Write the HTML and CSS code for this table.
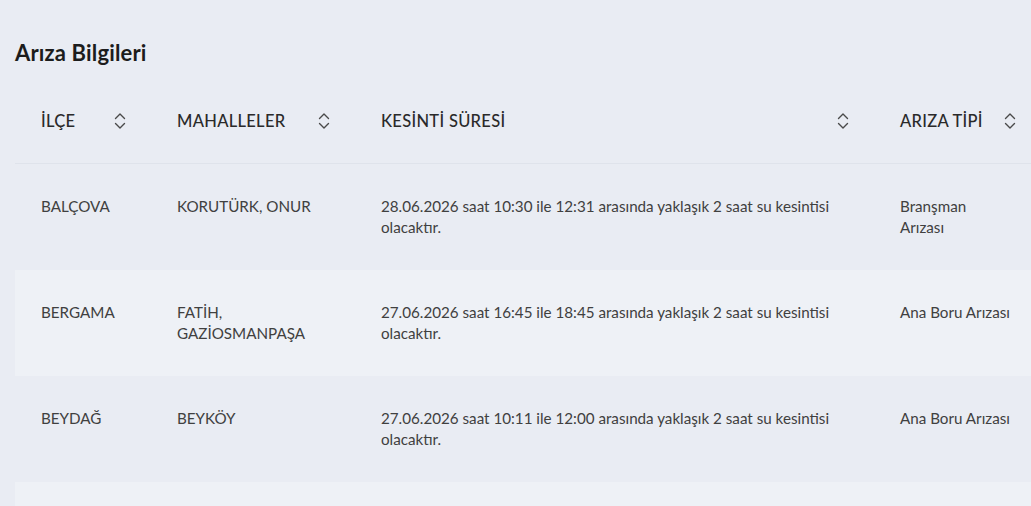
FILE: index.html
```html
<!DOCTYPE html>
<html lang="tr">
<head>
<meta charset="utf-8">
<title>Arıza Bilgileri</title>
<link rel="stylesheet" href="styles.css">
</head>
<body>
<main class="page">
  <h2 class="title">Arıza Bilgileri</h2>
  <div class="table-wrap">
    <table class="table">
      <colgroup>
        <col class="c1"><col class="c2"><col class="c3"><col class="c4">
      </colgroup>
      <thead>
        <tr>
          <th><div class="th"><span>İLÇE</span><svg class="sort" viewBox="0 0 12 20"><path d="M1.5 7.5 L6 3 L10.5 7.5 M1.5 12.5 L6 17 L10.5 12.5"/></svg></div></th>
          <th><div class="th"><span>MAHALLELER</span><svg class="sort" viewBox="0 0 12 20"><path d="M1.5 7.5 L6 3 L10.5 7.5 M1.5 12.5 L6 17 L10.5 12.5"/></svg></div></th>
          <th><div class="th"><span>KESİNTİ SÜRESİ</span><svg class="sort" viewBox="0 0 12 20"><path d="M1.5 7.5 L6 3 L10.5 7.5 M1.5 12.5 L6 17 L10.5 12.5"/></svg></div></th>
          <th><div class="th"><span>ARIZA TİPİ</span><svg class="sort" viewBox="0 0 12 20"><path d="M1.5 7.5 L6 3 L10.5 7.5 M1.5 12.5 L6 17 L10.5 12.5"/></svg></div></th>
        </tr>
      </thead>
      <tbody>
        <tr>
          <td>BALÇOVA</td>
          <td>KORUTÜRK, ONUR</td>
          <td>28.06.2026 saat 10:30 ile 12:31 arasında yaklaşık 2 saat su kesintisi olacaktır.</td>
          <td class="type">Branşman Arızası</td>
        </tr>
        <tr class="alt">
          <td>BERGAMA</td>
          <td>FATİH, GAZİOSMANPAŞA</td>
          <td>27.06.2026 saat 16:45 ile 18:45 arasında yaklaşık 2 saat su kesintisi olacaktır.</td>
          <td class="type">Ana Boru Arızası</td>
        </tr>
        <tr>
          <td>BEYDAĞ</td>
          <td>BEYKÖY</td>
          <td>27.06.2026 saat 10:11 ile 12:00 arasında yaklaşık 2 saat su kesintisi olacaktır.</td>
          <td class="type">Ana Boru Arızası</td>
        </tr>
        <tr class="alt">
          <td></td>
          <td></td>
          <td></td>
          <td class="type"></td>
        </tr>
      </tbody>
    </table>
  </div>
</main>
</body>
</html>
```

FILE: styles.css
```css
html, body {
  margin: 0;
  padding: 0;
  background: #e9ecf3;
  overflow: hidden;
}
body {
  font-family: "Lato", "Noto Sans", sans-serif;
  color: #3a3a3a;
}
.page {
  padding: 0 0 0 15px;
}
.title {
  margin: 0;
  padding-top: 40px;
  font-size: 22px;
  line-height: 26px;
  font-weight: 700;
  letter-spacing: 0.15px;
  color: #1c1c1c;
}
.table-wrap {
  margin-top: 17px;
  width: 1100px;
}
.table {
  border-collapse: collapse;
  table-layout: fixed;
  width: 1026px;
}
.c1 { width: 136px; }
.c2 { width: 204px; }
.c3 { width: 519px; }
.c4 { width: 167px; }
th {
  padding: 28px 26px 32px 26px;
  text-align: left;
  font-weight: 500;
  font-size: 16.5px;
  line-height: 20px;
  letter-spacing: 0.3px;
  color: #2a2a2a;
  border-bottom: 1px solid #dfe3eb;
}
.th {
  display: flex;
  justify-content: space-between;
  align-items: center;
}
.sort {
  width: 12px;
  height: 20px;
  flex: none;
  margin-right: -1px;
  fill: none;
  stroke: #4a4a4a;
  stroke-width: 1.4;
  stroke-linecap: round;
  stroke-linejoin: round;
}
td {
  height: 106px;
  box-sizing: border-box;
  padding: 32px 26px 0 26px;
  vertical-align: top;
  font-size: 15.2px;
  line-height: 21px;
  color: #404040;
}
td.type {
  padding-right: 30px;
}
tr.alt td {
  background: #eef1f6;
}
```
